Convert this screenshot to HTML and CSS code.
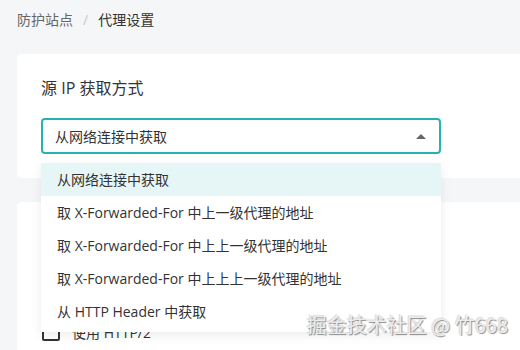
FILE: index.html
```html
<!DOCTYPE html>
<html lang="zh-CN">
<head>
  <meta charset="UTF-8">
  <meta name="viewport" content="width=device-width, initial-scale=1.0">
  <title>代理设置</title>
  <link rel="stylesheet" href="styles.css">
</head>
<body>
  <div class="page">
    <div class="breadcrumb">
      <span class="crumb">防护站点</span>
      <span class="sep">/</span>
      <span class="crumb current">代理设置</span>
    </div>

    <div class="card">
      <h3 class="card-title">源 IP 获取方式</h3>
      <div class="select open">
        <div class="select-box">
          <span>从网络连接中获取</span>
          <span class="arrow"></span>
        </div>
        <ul class="menu">
          <li class="active">从网络连接中获取</li>
          <li>取 X-Forwarded-For 中上一级代理的地址</li>
          <li>取 X-Forwarded-For 中上上一级代理的地址</li>
          <li>取 X-Forwarded-For 中上上上一级代理的地址</li>
          <li>从 HTTP Header 中获取</li>
        </ul>
      </div>
    </div>

    <div class="card card-options">
      <label class="check"><span class="box"></span>使用 HTTP/2</label>
    </div>
  </div>

  <div class="watermark">掘金技术社区 @ 竹668</div>
</body>
</html>
```

FILE: styles.css
```css
body {
  margin: 0;
  background: #f5f6f8;
  font-family: 'Open Sans', 'Noto Sans CJK SC', sans-serif;
  font-size: 14px;
  color: #333;
  overflow: hidden;
  height: 350px;
}
.page {
  width: 640px;
  padding: 10px 0 0 17px;
}
.breadcrumb {
  height: 20px;
  line-height: 20px;
  display: flex;
  gap: 10px;
}
.crumb {
  color: #666;
}
.crumb.current {
  color: #333;
}
.sep {
  color: #c8c8c8;
}
.card {
  background: #fff;
  border-radius: 5px;
  padding: 22px 24px 24px;
  margin-top: 24px;
}
.card-options {
  padding-top: 120px;
}
.card-title {
  margin: 0 0 18px;
  font-size: 16px;
  font-weight: normal;
  line-height: 24px;
  color: #333;
}
.select {
  position: relative;
  width: 400px;
}
.select-box {
  height: 32px;
  border: 2px solid #2bb0b0;
  border-radius: 4px;
  display: flex;
  align-items: center;
  justify-content: space-between;
  padding: 0 12px;
  box-sizing: content-box;
  width: 372px;
}
.arrow {
  width: 0;
  height: 0;
  border-left: 5px solid transparent;
  border-right: 5px solid transparent;
  border-bottom: 5px solid #666;
  margin-right: 1px;
}
.menu {
  position: absolute;
  top: 45px;
  left: 0;
  width: 400px;
  margin: 0;
  padding: 0 0 4px;
  list-style: none;
  background: #fff;
  box-shadow: 0 3px 10px rgba(0, 0, 0, 0.08);
  z-index: 2;
}
.menu li {
  height: 33px;
  line-height: 33px;
  padding-left: 16px;
}
.menu li.active {
  background: #e6f6f6;
}
.check {
  display: flex;
  align-items: center;
  gap: 12px;
  color: #333;
}
.box {
  width: 14px;
  height: 14px;
  border: 2px solid #333;
  border-radius: 2px;
  margin-left: 1px;
}
.watermark {
  position: absolute;
  right: 12px;
  bottom: 11px;
  font-family: 'Noto Sans CJK SC', sans-serif;
  font-size: 20px;
  color: #ececec;
  text-shadow: 1px 1px 1px rgba(0, 0, 0, 0.45), -1px -1px 1px rgba(0, 0, 0, 0.15);
  z-index: 3;
}
```
